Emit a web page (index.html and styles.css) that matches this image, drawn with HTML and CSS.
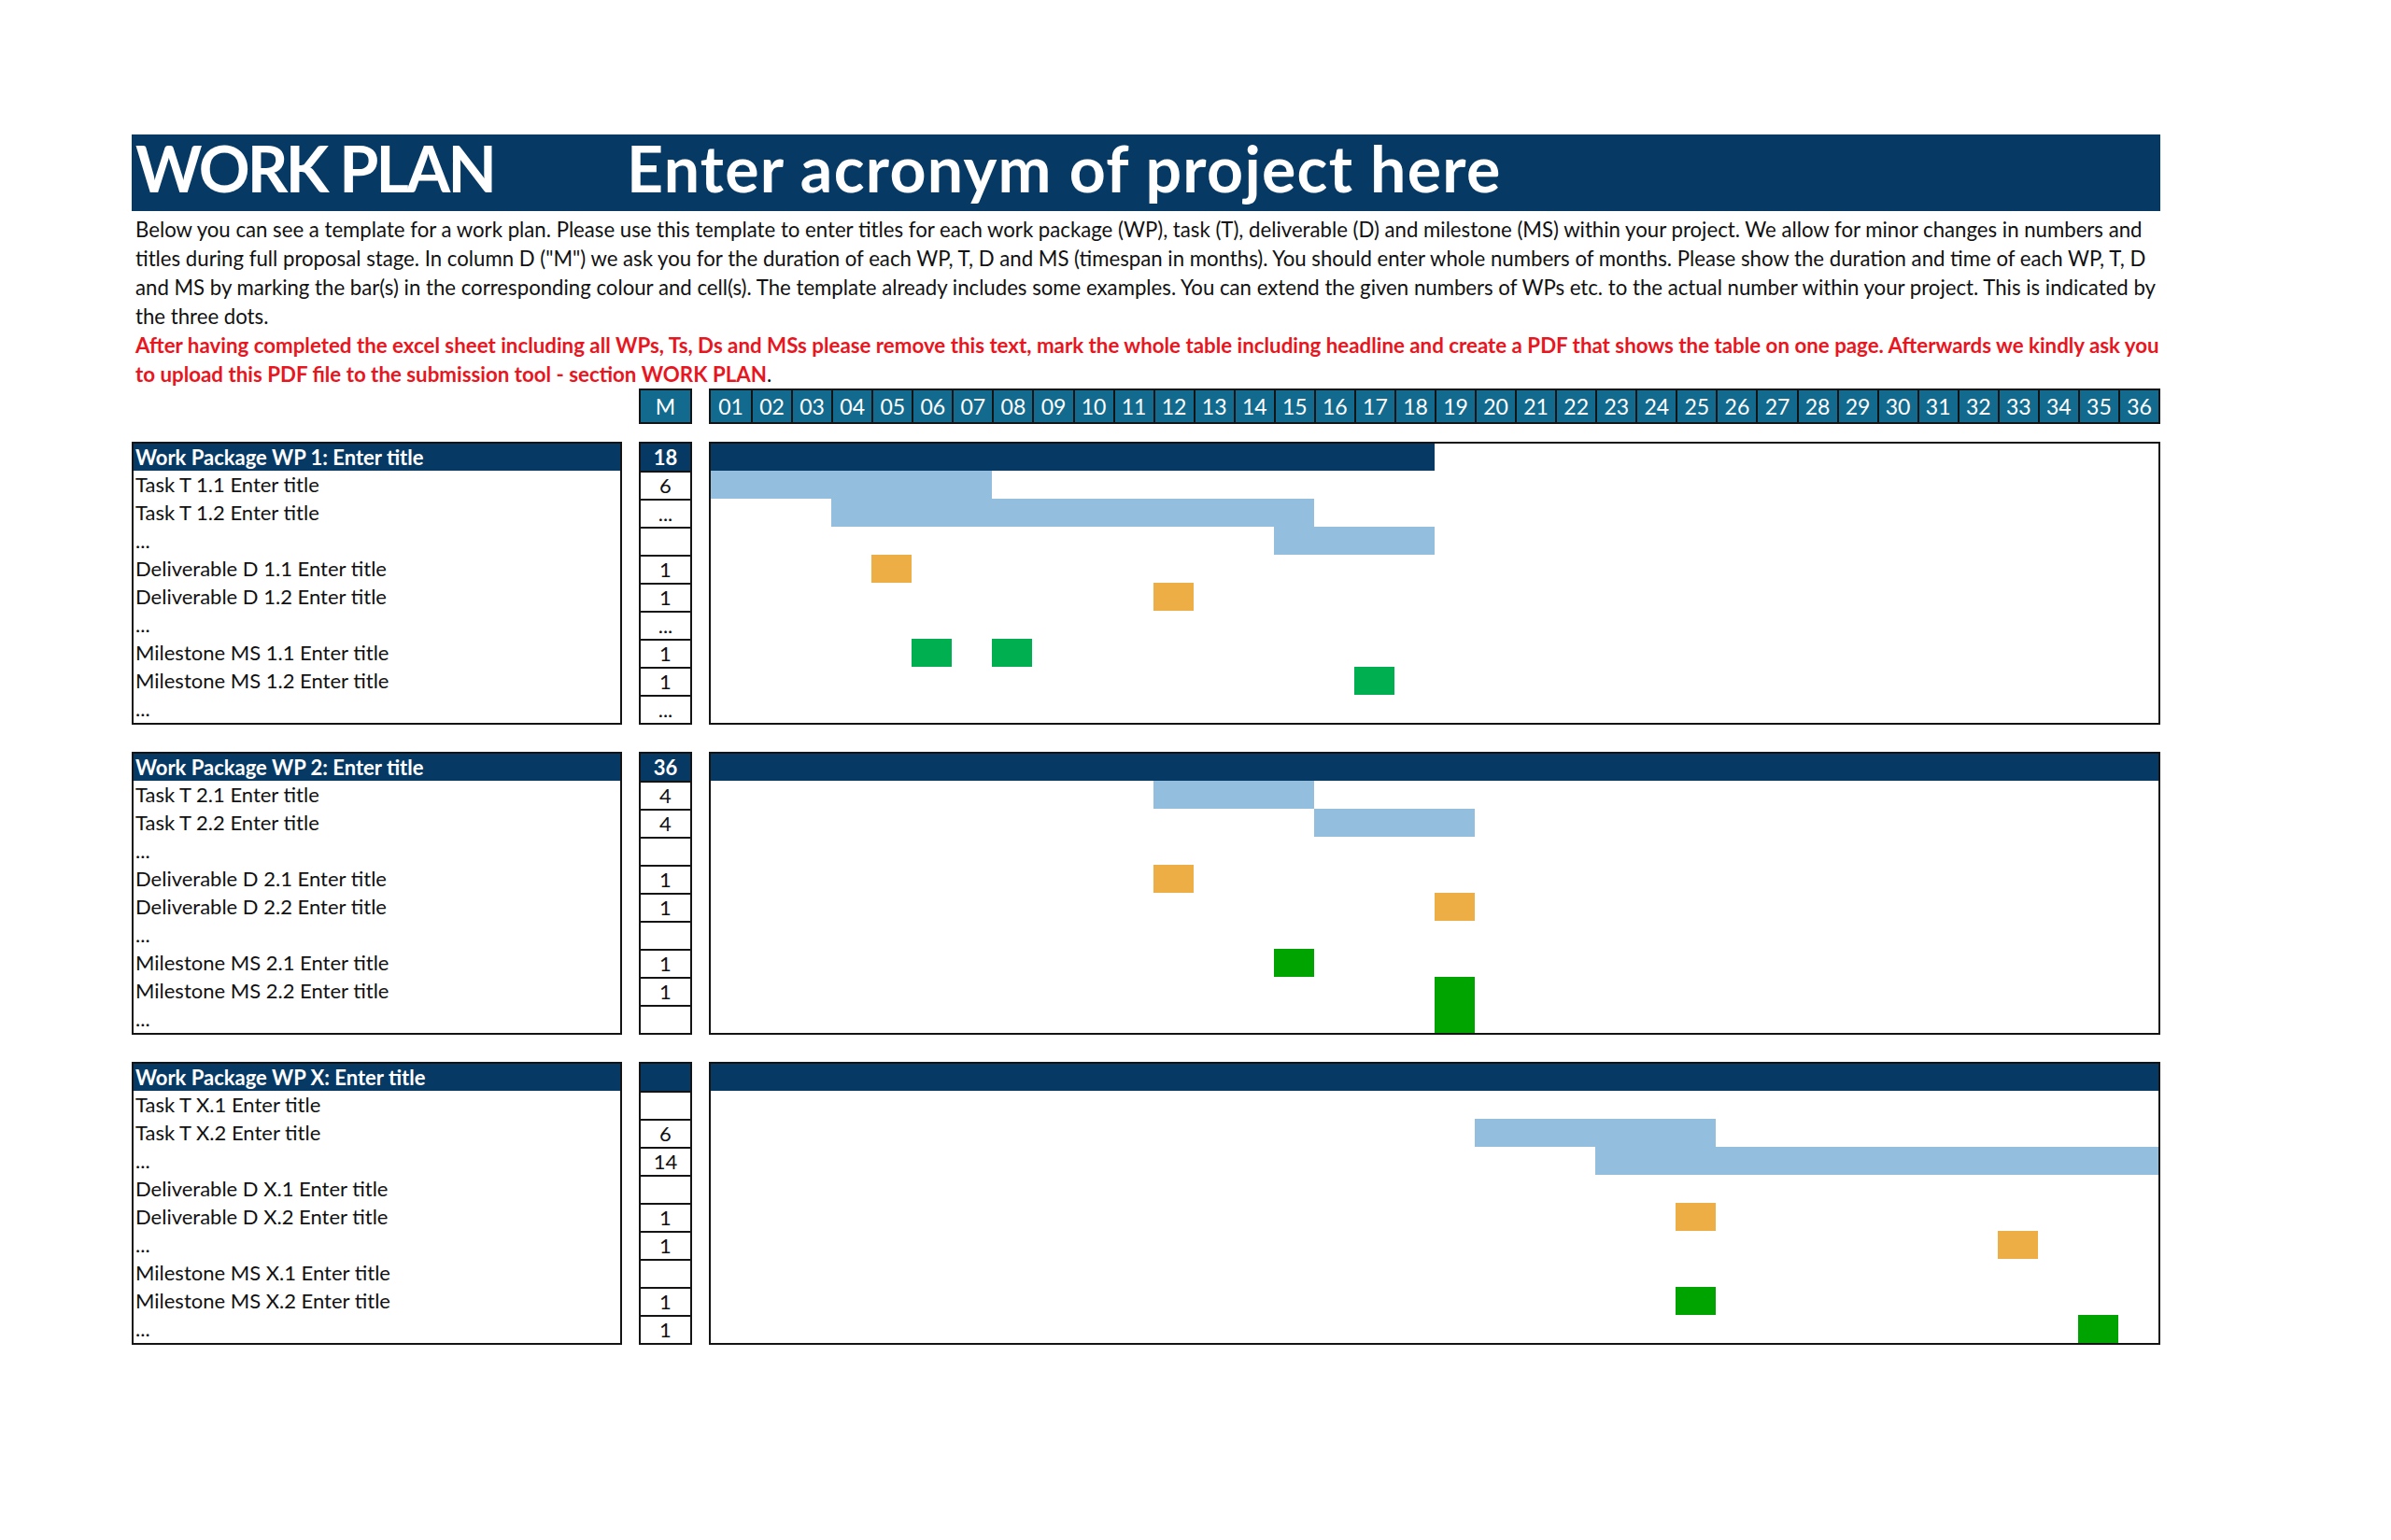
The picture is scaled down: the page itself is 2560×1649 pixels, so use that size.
FILE: index.html
```html
<!DOCTYPE html>
<html lang="en">
<head>
<meta charset="utf-8">
<title>Work Plan</title>
<link rel="stylesheet" href="styles.css">
</head>
<body>
<div class="page">
  <header class="title-bar">
    <span class="title-main">WORK PLAN</span>
    <span class="title-project">Enter acronym of project here</span>
  </header>

  <div class="intro">
    <p class="desc">
      <span class="line">Below you can see a template for a work plan. Please use this template to enter titles for each work package (WP), task (T), deliverable (D) and milestone (MS) within your project. We allow for minor changes in numbers and</span>
      <span class="line">titles during full proposal stage. In column D ("M") we ask you for the duration of each WP, T, D and MS (timespan in months). You should enter whole numbers of months. Please show the duration and time of each WP, T, D</span>
      <span class="line">and MS by marking the bar(s) in the corresponding colour and cell(s). The template already includes some examples. You can extend the given numbers of WPs etc. to the actual number within your project. This is indicated by</span>
      <span class="line">the three dots.</span>
    </p>
    <p class="warn">
      <span class="line">After having completed the excel sheet including all WPs, Ts, Ds and MSs please remove this text, mark the whole table including headline and create a PDF that shows the table on one page. Afterwards we kindly ask you</span>
      <span class="line">to upload this PDF file to the submission tool - section WORK PLAN<span class="plain">.</span></span>
    </p>
  </div>

  <div class="grid-row head-row">
    <div></div>
    <div class="m-head">M</div>
    <div class="months">
      <span>01</span><span>02</span><span>03</span><span>04</span><span>05</span><span>06</span><span>07</span><span>08</span><span>09</span><span>10</span><span>11</span><span>12</span><span>13</span><span>14</span><span>15</span><span>16</span><span>17</span><span>18</span><span>19</span><span>20</span><span>21</span><span>22</span><span>23</span><span>24</span><span>25</span><span>26</span><span>27</span><span>28</span><span>29</span><span>30</span><span>31</span><span>32</span><span>33</span><span>34</span><span>35</span><span>36</span>
    </div>
  </div>

  <!-- WP 1 -->
  <section class="grid-row wp">
    <div class="labels">
      <div class="wp-title">Work Package WP 1: Enter title</div>
      <div>Task T 1.1 Enter title</div>
      <div>Task T 1.2 Enter title</div>
      <div>...</div>
      <div>Deliverable D 1.1 Enter title</div>
      <div>Deliverable D 1.2 Enter title</div>
      <div>...</div>
      <div>Milestone MS 1.1 Enter title</div>
      <div>Milestone MS 1.2 Enter title</div>
      <div>...</div>
    </div>
    <div class="mcol">
      <div class="wp-num">18</div>
      <div>6</div>
      <div>...</div>
      <div></div>
      <div>1</div>
      <div>1</div>
      <div>...</div>
      <div>1</div>
      <div>1</div>
      <div>...</div>
    </div>
    <div class="chart">
      <div class="bar wp-bar" style="grid-row:1;grid-column:1 / span 18"></div>
      <div class="bar task" style="grid-row:2;grid-column:1 / span 7"></div>
      <div class="bar task" style="grid-row:3;grid-column:4 / span 12"></div>
      <div class="bar task" style="grid-row:4;grid-column:15 / span 4"></div>
      <div class="bar deliv" style="grid-row:5;grid-column:5"></div>
      <div class="bar deliv" style="grid-row:6;grid-column:12"></div>
      <div class="bar ms" style="grid-row:8;grid-column:6"></div>
      <div class="bar ms" style="grid-row:8;grid-column:8"></div>
      <div class="bar ms" style="grid-row:9;grid-column:17"></div>
    </div>
  </section>

  <!-- WP 2 -->
  <section class="grid-row wp">
    <div class="labels">
      <div class="wp-title">Work Package WP 2: Enter title</div>
      <div>Task T 2.1 Enter title</div>
      <div>Task T 2.2 Enter title</div>
      <div>...</div>
      <div>Deliverable D 2.1 Enter title</div>
      <div>Deliverable D 2.2 Enter title</div>
      <div>...</div>
      <div>Milestone MS 2.1 Enter title</div>
      <div>Milestone MS 2.2 Enter title</div>
      <div>...</div>
    </div>
    <div class="mcol">
      <div class="wp-num">36</div>
      <div>4</div>
      <div>4</div>
      <div></div>
      <div>1</div>
      <div>1</div>
      <div></div>
      <div>1</div>
      <div>1</div>
      <div></div>
    </div>
    <div class="chart">
      <div class="bar wp-bar" style="grid-row:1;grid-column:1 / span 36"></div>
      <div class="bar task" style="grid-row:2;grid-column:12 / span 4"></div>
      <div class="bar task" style="grid-row:3;grid-column:16 / span 4"></div>
      <div class="bar deliv" style="grid-row:5;grid-column:12"></div>
      <div class="bar deliv" style="grid-row:6;grid-column:19"></div>
      <div class="bar ms-dark" style="grid-row:8;grid-column:15"></div>
      <div class="bar ms-dark" style="grid-row:9 / span 2;grid-column:19"></div>
    </div>
  </section>

  <!-- WP X -->
  <section class="grid-row wp">
    <div class="labels">
      <div class="wp-title">Work Package WP X: Enter title</div>
      <div>Task T X.1 Enter title</div>
      <div>Task T X.2 Enter title</div>
      <div>...</div>
      <div>Deliverable D X.1 Enter title</div>
      <div>Deliverable D X.2 Enter title</div>
      <div>...</div>
      <div>Milestone MS X.1 Enter title</div>
      <div>Milestone MS X.2 Enter title</div>
      <div>...</div>
    </div>
    <div class="mcol">
      <div class="wp-num"></div>
      <div></div>
      <div>6</div>
      <div>14</div>
      <div></div>
      <div>1</div>
      <div>1</div>
      <div></div>
      <div>1</div>
      <div>1</div>
    </div>
    <div class="chart">
      <div class="bar wp-bar" style="grid-row:1;grid-column:1 / span 36"></div>
      <div class="bar task" style="grid-row:3;grid-column:20 / span 6"></div>
      <div class="bar task" style="grid-row:4;grid-column:23 / span 14"></div>
      <div class="bar deliv" style="grid-row:6;grid-column:25"></div>
      <div class="bar deliv" style="grid-row:7;grid-column:33"></div>
      <div class="bar ms-dark" style="grid-row:9;grid-column:25"></div>
      <div class="bar ms-dark" style="grid-row:10;grid-column:35"></div>
    </div>
  </section>
</div>
</body>
</html>
```

FILE: styles.css
```css
* { box-sizing: border-box; }

html, body {
  margin: 0;
  padding: 0;
  background: #ffffff;
}

body {
  font-family: Lato, "Open Sans", "Liberation Sans", sans-serif;
  color: #111111;
}

.page {
  padding: 144px 0 0 141px;
  width: 2313px;
}

/* ---------- Title bar ---------- */
.title-bar {
  display: flex;
  align-items: flex-end;
  height: 82px;
  background: #063a65;
  color: #ffffff;
  font-weight: 700;
  font-size: 68px;
  line-height: 1;
  padding: 0 0 12px 4px;
}

.title-main {
  width: 526px;
  flex: none;
  letter-spacing: -2.8px;
}

.title-project {
  flex: none;
  letter-spacing: 1.3px;
}

/* ---------- Intro text ---------- */
.intro {
  padding: 4px 0 0 4px;
  font-size: 22.2px;
  line-height: 31px;
}

.intro p {
  margin: 0;
}

.line {
  display: block;
  white-space: nowrap;
}

.warn {
  color: #e8161e;
  font-weight: 700;
  font-size: 22.3px;
}

.plain {
  color: #111111;
  font-weight: 400;
}

/* ---------- Grid rows ---------- */
.grid-row {
  display: grid;
  grid-template-columns: 525px 57px 1554px;
  column-gap: 18px;
}

.head-row {
  height: 38px;
  margin-bottom: 19px;
}

.m-head {
  background: #126b8e;
  border: 2px solid #141414;
  color: #ffffff;
  font-size: 23px;
  display: flex;
  align-items: center;
  justify-content: center;
}

.months {
  display: grid;
  grid-template-columns: repeat(36, 1fr);
  border: 2px solid #141414;
  background: #126b8e;
}

.months span {
  display: flex;
  align-items: center;
  justify-content: center;
  color: #ffffff;
  font-size: 23px;
  border-left: 2px solid #141414;
}

.months span:first-child {
  border-left: none;
}

/* ---------- Work package blocks ---------- */
.wp {
  height: 303px;
  margin-bottom: 29px;
}

.labels,
.mcol,
.chart {
  border: 2px solid #141414;
}

.labels > div {
  height: 30px;
  line-height: 30px;
  padding-left: 2px;
  font-size: 22px;
  white-space: nowrap;
}

.labels > .wp-title {
  height: 29px;
  line-height: 29px;
  background: #063a65;
  color: #ffffff;
  font-weight: 700;
}

.mcol > div {
  height: 30px;
  line-height: 28px;
  border-top: 2px solid #141414;
  text-align: center;
  font-size: 22px;
}

.mcol > .wp-num {
  height: 29px;
  line-height: 29px;
  border-top: none;
  background: #063a65;
  color: #ffffff;
  font-weight: 700;
}

.chart {
  display: grid;
  grid-template-columns: repeat(36, 1fr);
  grid-template-rows: 29px repeat(9, 30px);
}

.bar.wp-bar { background: #063a65; }
.bar.task { background: #93bedd; }
.bar.deliv { background: #eeae46; }
.bar.ms { background: #00b050; }
.bar.ms-dark { background: #00a400; }
```
